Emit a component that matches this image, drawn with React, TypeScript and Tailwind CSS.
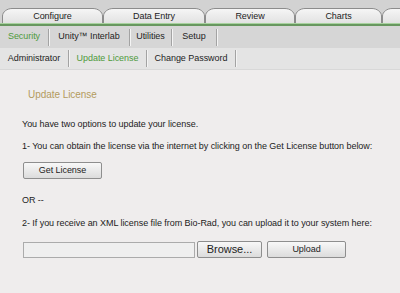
const tabs = [
  { label: 'Configure', w: 101, cls: 'w-[101px]' },
  { label: 'Data Entry', w: 102, cls: 'w-[102px]' },
  { label: 'Review', w: 90, cls: 'w-[90px]' },
  { label: 'Charts', w: 87, cls: 'w-[87px]' },
  { label: '', w: 80, cls: 'w-[80px]' },
]

function Tab({ label, w, cls, idx }: { label: string; w: number; cls: string; idx: number }) {
  const d = `M0.5 23 L0.5 16 C0.5 12 5 8.5 10 8.5 L${w - 10} 8.5 C${w - 5} 8.5 ${w - 0.5} 12 ${w - 0.5} 16 L${w - 0.5} 23`
  return (
    <div className={`relative flex h-[23px] shrink-0 items-end justify-center ${cls}`}>
      <svg className="absolute inset-0" width={w} height={23}>
        <defs>
          <linearGradient id={`tg${idx}`} x1="0" y1="0" x2="0" y2="1">
            <stop offset="0" stopColor="#f6f6f6" />
            <stop offset="1" stopColor="#e2e2e2" />
          </linearGradient>
        </defs>
        <path d={d} fill={`url(#tg${idx})`} stroke="#8c8c8c" strokeWidth="1" />
      </svg>
      <span className="relative leading-[13px] text-[#222]">{label}</span>
    </div>
  )
}

function NavItem({ label, cls, active }: { label: string; cls: string; active?: boolean }) {
  return (
    <div className={`flex h-full shrink-0 items-center justify-center ${cls}`}>
      <span className={`flex-1 text-center ${active ? 'text-[#4f9a3c]' : 'text-[#1e1e1e]'}`}>{label}</span>
      <span className="h-[17px] w-px bg-[#a3a3a3] shadow-[1px_0_0_#f4f4f4]" />
    </div>
  )
}

function Btn({ children, cls }: { children: React.ReactNode; cls: string }) {
  return (
    <button
      type="button"
      className={`flex h-[17px] items-center justify-center rounded-[2px] border border-[#8e8e8e] bg-gradient-to-b from-[#f8f8f8] to-[#dcdcdc] text-[#222] ${cls}`}
    >
      {children}
    </button>
  )
}

export default function App() {
  return (
    <div className="h-[293px] w-[400px] overflow-hidden bg-[#efeded] font-['Tahoma','Liberation_Sans',sans-serif] text-[9px] tracking-[-0.05px]">
      {/* top tabs */}
      <div className="flex h-[23px] overflow-hidden bg-[#d2d2d2] pl-[2px]">
        {tabs.map((t, i) => (
          <Tab key={i} idx={i} {...t} />
        ))}
      </div>
      <div className="h-px bg-[#a8d29f]" />
      <div className="h-[2px] bg-[#67975f]" />

      {/* second row */}
      <div className="flex h-[22px] items-center bg-[#d6d6d6]">
        <NavItem label="Security" cls="w-[49px]" active />
        <NavItem label="Unity™ Interlab" cls="w-[81px]" />
        <NavItem label="Utilities" cls="w-[42px]" />
        <NavItem label="Setup" cls="w-[45px]" />
      </div>

      {/* third row */}
      <div className="flex h-[22px] items-center border-b border-[#d8d8d8] bg-[#e4e4e4]">
        <NavItem label="Administrator" cls="w-[69px]" />
        <NavItem label="Update License" cls="w-[78px]" active />
        <NavItem label="Change Password" cls="w-[89px]" />
      </div>

      {/* content */}
      <div className="pl-[22px] pt-[18px] text-[#1c1c1c]">
        <h2 className="pl-[6px] text-[10px] leading-[14px] text-[#b39b5e]">Update License</h2>
        <p className="mt-[16px] leading-[12px]">You have two options to update your license.</p>
        <p className="mt-[10px] leading-[12px]">
          1- You can obtain the license via the internet by clicking on the Get License button below:
        </p>
        <Btn cls="ml-px mt-[10px] w-[79px]">Get License</Btn>
        <p className="mt-[15px] leading-[12px]">OR --</p>
        <p className="mt-[11px] leading-[12px]">
          2- If you receive an XML license file from Bio-Rad, you can upload it to your system here:
        </p>
        <div className="mt-[12px] flex items-center gap-[2px] pl-px">
          <input
            type="text"
            className="h-[16px] w-[172px] border border-[#ababab] bg-[#efefef] outline-none"
          />
          <Btn cls="w-[65px] text-[11px]">Browse...</Btn>
          <Btn cls="ml-[3px] w-[79px]">Upload</Btn>
        </div>
      </div>
    </div>
  )
}
